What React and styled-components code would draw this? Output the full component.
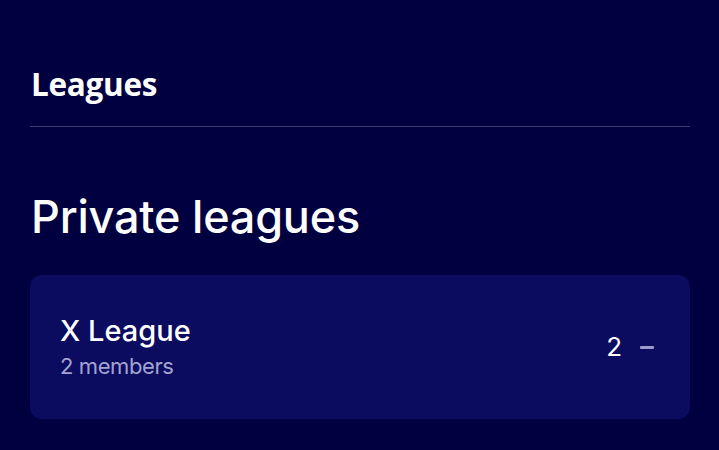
import React from "react";
import styled, { createGlobalStyle } from "styled-components";

const Global = createGlobalStyle`
  html, body { margin: 0; padding: 0; background: #000040; }
  body { font-family: Inter, "Noto Sans", sans-serif; color: #fff; }
`;

const Page = styled.div`
  width: 719px;
  height: 450px;
  box-sizing: border-box;
  padding: 64px 29px 0 30px;
  background: #000040;
  overflow: hidden;
`;

const Header = styled.h1`
  margin: 0;
  padding: 0 0 0 1px;
  font-family: "Open Sans", sans-serif;
  font-weight: 700;
  font-size: 31.5px;
  line-height: 40px;
  letter-spacing: -0.3px;
  height: 48px;
  border-bottom: 1px solid #3b3b72;
  box-sizing: content-box;
  padding-bottom: 14px;
`;

const SectionTitle = styled.h2`
  margin: 0;
  padding: 0 0 0 1px;
  font-weight: 500;
  font-size: 45px;
  line-height: 56px;
  margin-top: 62px;
  letter-spacing: -0.2px;
`;

const Card = styled.div`
  margin-top: 30px;
  height: 144px;
  border-radius: 12px;
  background: #0b0b5f;
  display: flex;
  align-items: center;
  justify-content: space-between;
  padding: 0 36px 0 30px;
  box-sizing: border-box;
`;

const Info = styled.div`
  display: flex;
  flex-direction: column;
  gap: 3px;
`;

const Name = styled.div`
  font-weight: 500;
  font-size: 29px;
  line-height: 34px;
`;

const Members = styled.div`
  font-size: 22px;
  line-height: 30px;
  font-weight: 400;
  letter-spacing: -0.4px;
  color: #a3a3cf;
`;

const Right = styled.div`
  display: flex;
  align-items: center;
  gap: 18px;
`;

const Count = styled.div`
  font-size: 26px;
  line-height: 30px;
`;

const Dash = styled.div`
  width: 14px;
  height: 3px;
  border-radius: 1px;
  background: #9c9cc9;
`;

export default function App() {
  return (
    <>
      <Global />
      <Page>
        <Header>Leagues</Header>
        <SectionTitle>Private leagues</SectionTitle>
        <Card>
          <Info>
            <Name>X League</Name>
            <Members>2 members</Members>
          </Info>
          <Right>
            <Count>2</Count>
            <Dash />
          </Right>
        </Card>
      </Page>
    </>
  );
}
